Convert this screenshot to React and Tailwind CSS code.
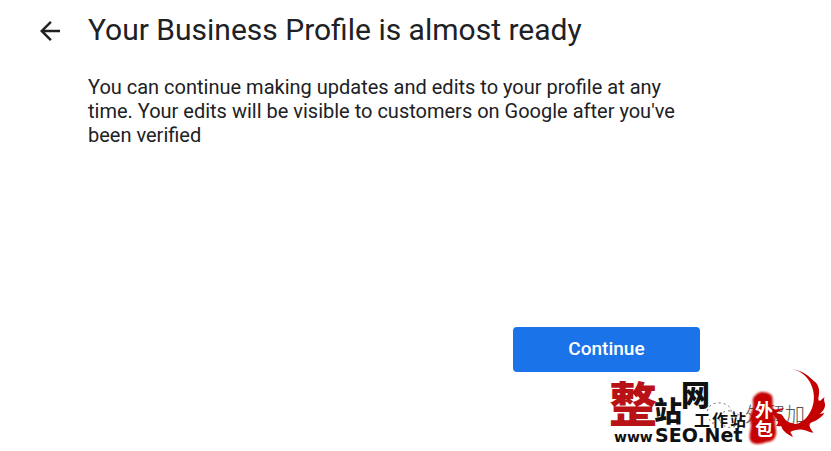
import { MdArrowBack } from "react-icons/md";

const SiteMark = () => (
    <svg
        className="absolute right-0 bottom-0 pointer-events-none"
        width="231"
        height="91"
        viewBox="0 0 231 91"
        role="img"
        aria-label="整站网工作站"
    >
        {/* Chat bubbles and faint name under the logo */}
        <g fill="none" stroke="#777777" strokeDasharray="2 3">
            <path d="M108 56C105 46 114 42 121 43C129 44 132 49 131 53M109 59L112 63L117 63" />
            <path d="M120 61C118 54 124 50 131 51C139 52 142 58 138 64C134 69 124 69 120 61Z" />
        </g>
        <text x="145" y="62" fontSize="20" fill="#555555" className="font-['Noto_Sans_CJK_SC',sans-serif] font-light">外贸加</text>

        {/* Brush title */}
        <g className="font-['Noto_Sans_CJK_SC',sans-serif] font-black">
            <text x="9" y="62" fontSize="48" fill="#b91216">整</text>
            <text x="54" y="62" fontSize="28" fill="#111111">站</text>
            <text x="81" y="46" fontSize="29" fill="#111111">网</text>
        </g>
        <g fontSize="16" fill="#111111" className="font-['Noto_Sans_CJK_SC',sans-serif] font-bold">
            <text x="94" y="66">工</text>
            <text x="112" y="66">作</text>
            <text x="130" y="66">站</text>
        </g>
        <g fill="#111111" className="font-['DejaVu_Sans',sans-serif] font-bold">
            <text x="14" y="82" fontSize="14">www</text>
            <text x="55" y="82" fontSize="19">SEO.Net</text>
        </g>

        {/* Seal */}
        <path
            d="M157 34C160 31 167 32 170 34C174 36 172 42 173 49C175 56 175 64 176 70C177 78 173 82 167 82C161 84 153 86 150 80C148 73 153 67 150 61C149 54 154 49 153 43C152 38 154 36 157 34Z"
            fill="#c40000"
            className="blur-[1px]"
        />
        <g fontSize="18" fill="#ffffff" className="font-['Noto_Sans_CJK_SC',sans-serif] font-bold">
            <text x="155" y="57">外</text>
            <text x="155" y="76">包</text>
        </g>

        {/* Flame */}
        <g transform="translate(170 40) scale(.3333)">
            <path
                d="M62 -93C90 -91 110 -78 126 -62C132 -55 140 -53 144 -42C150 -29 147 -17 145 -5C145 4 149 4 153 0L164 -9C159 2 166 5 165 18C163 29 157 35 149 42L163 39C155 53 139 62 123 68C114 73 120 86 131 98C118 97 108 90 98 89C83 87 70 91 61 96L69 111C52 103 38 94 34 79L18 78C27 71 25 63 16 52C7 43 5 34 9 27C19 31 30 25 42 25C37 33 26 33 19 39C31 41 39 45 42 54C49 65 64 71 79 72C104 65 121 43 129 15C136 -12 130 -42 113 -64C99 -82 81 -91 62 -93Z"
                fill="#c40000"
            />
        </g>
    </svg>
);

const App = () => {
    return (
        <div className="relative min-h-screen bg-white font-[Roboto,sans-serif] text-[#202124]">
            <main className="flex items-start max-w-[700px] pt-3 pl-[35px]">
                <button type="button" aria-label="Back" className="mt-1 mr-[23px] shrink-0">
                    <MdArrowBack size={30} />
                </button>

                <div className="flex-1">
                    <h1 className="text-[30px] leading-9">Your Business Profile is almost ready</h1>
                    <p className="mt-[27px] text-xl leading-6">
                        You can continue making updates and edits to your profile at any time. Your edits will be visible to customers on Google after you've been verified
                    </p>

                    <div className="flex justify-end mt-45">
                        <button
                            type="button"
                            className="w-[187px] h-[45px] pb-0.5 rounded bg-[#1a73e8] text-[19px] leading-6 font-medium text-white"
                        >
                            Continue
                        </button>
                    </div>
                </div>
            </main>

            <SiteMark />
        </div>
    );
};

export default App;
